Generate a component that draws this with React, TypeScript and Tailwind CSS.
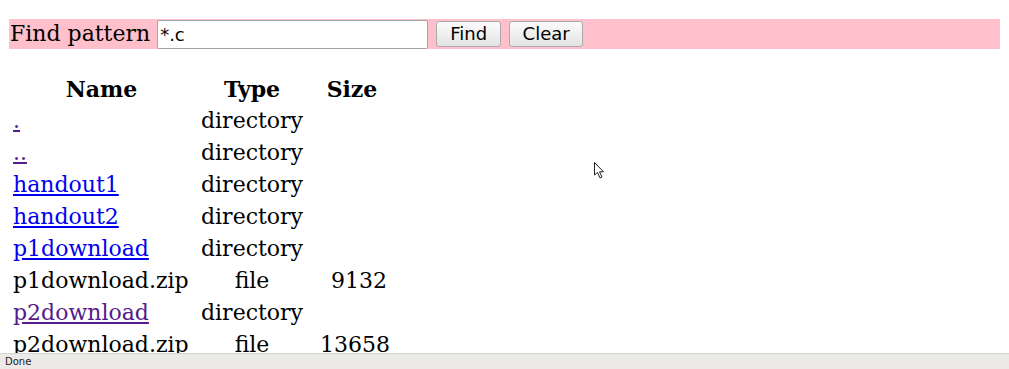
import React from 'react';

type Entry = { name: string; type: string; size?: string; link?: boolean; visited?: boolean };

const entries: Entry[] = [
  { name: '.', type: 'directory', link: true, visited: true },
  { name: '..', type: 'directory', link: true, visited: true },
  { name: 'handout1', type: 'directory', link: true },
  { name: 'handout2', type: 'directory', link: true },
  { name: 'p1download', type: 'directory', link: true },
  { name: 'p1download.zip', type: 'file', size: '9132' },
  { name: 'p2download', type: 'directory', link: true, visited: true },
  { name: 'p2download.zip', type: 'file', size: '13658' },
];

const serif = "font-['DejaVu_Serif','Liberation_Serif',serif]";
const sans = "font-['DejaVu_Sans','Liberation_Sans',sans-serif]";

const App: React.FC = () => {
  return (
    <div className="relative flex flex-col h-screen w-full bg-white overflow-hidden">
      <div className={`flex-1 overflow-hidden px-[9px] pt-[19px] text-black ${serif}`}>
        {/* Search bar */}
        <div className="flex items-center h-[30px] bg-[#ffc0cb]">
          <span className="text-[22px] leading-none pl-[1px]">Find pattern</span>
          <input
            defaultValue="*.c"
            className={`ml-[7px] w-[271px] h-[29px] bg-white border border-[#a5a5a5] rounded-[2px] px-[2px] text-[18px] text-black outline-none ${sans}`}
          />
          <button className={`ml-[8px] w-[65px] h-[26px] rounded-[3px] border border-[#ababab] bg-gradient-to-b from-[#fbfbfb] to-[#e4e4e4] text-[18px] leading-none text-black ${sans}`}>
            Find
          </button>
          <button className={`ml-[8px] w-[74px] h-[26px] rounded-[3px] border border-[#ababab] bg-gradient-to-b from-[#fbfbfb] to-[#e4e4e4] text-[18px] leading-none text-black ${sans}`}>
            Clear
          </button>
        </div>

        {/* Listing */}
        <div className="mt-[24px] ml-[4px] grid grid-cols-[177px_113px_84px] text-[22px] leading-[32px]">
          <div className="font-bold text-center">Name</div>
          <div className="font-bold text-center pl-[11px]">Type</div>
          <div className="font-bold text-center pl-[14px]">Size</div>
          {entries.map((e) => (
            <React.Fragment key={e.name}>
              <div className="whitespace-nowrap">
                {e.link ? (
                  <a href="#" className={`underline ${e.visited ? 'text-[#551a8b]' : 'text-[#0000ee]'}`}>
                    {e.name}
                  </a>
                ) : (
                  e.name
                )}
              </div>
              <div className="text-center pl-[11px] whitespace-nowrap">{e.type}</div>
              <div className="text-right pl-[17px]">{e.size ?? ''}</div>
            </React.Fragment>
          ))}
        </div>
      </div>

      {/* Status bar */}
      <div className={`h-[16px] shrink-0 border-t border-[#d4d4d2] bg-[#ebeae8] pl-[5px] text-[10px] leading-[15px] text-[#222] ${sans}`}>
        Done
      </div>

      {/* Mouse pointer */}
      <svg className="absolute left-[594px] top-[162px]" width="12" height="18" viewBox="0 0 12 18">
        <path d="M0.5 0.5 L0.5 13 L3.5 10.5 L6 16 L8 15 L5.5 9.8 L9.5 9.8 Z" fill="#fff" stroke="#222" strokeWidth="1" />
      </svg>
    </div>
  );
};

export default App;
